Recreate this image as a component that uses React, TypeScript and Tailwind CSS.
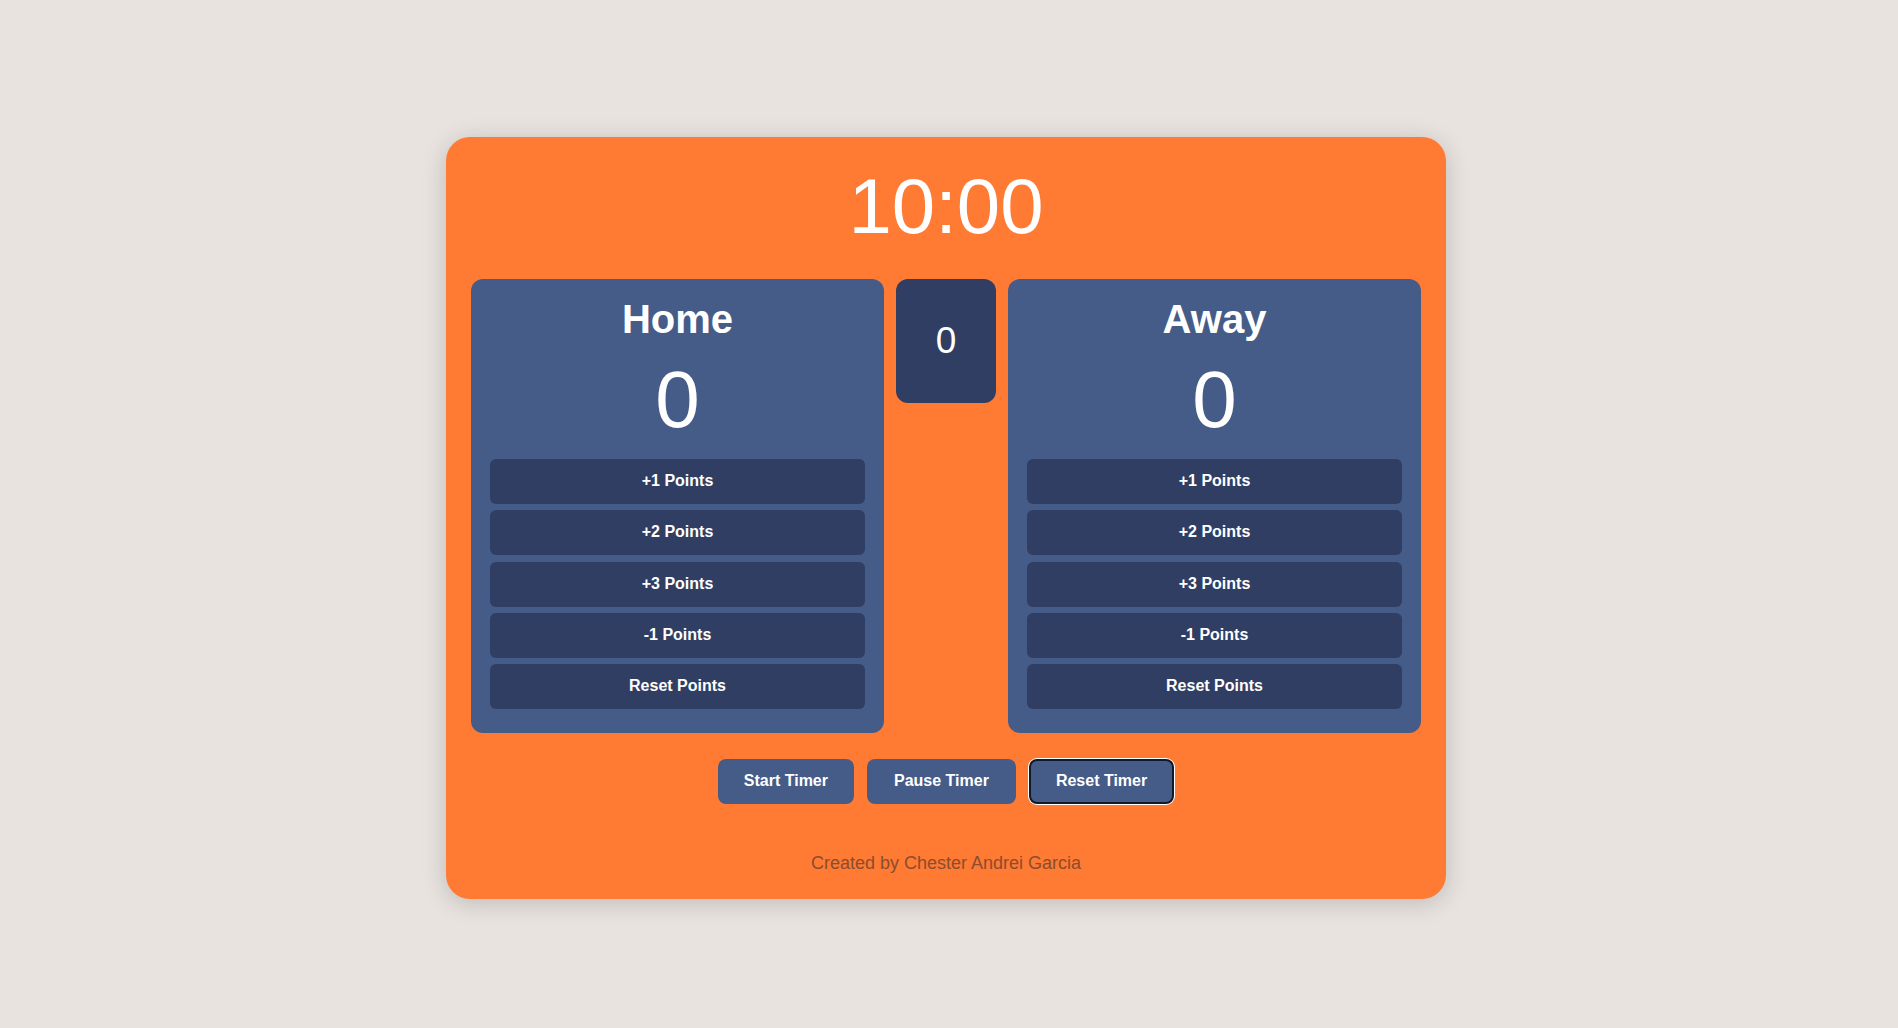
import React, { useState } from "react";

function TeamPanel({ name }: { name: string }) {
  const [score, setScore] = useState(0);
  const actions: [string, (s: number) => number][] = [
    ["+1 Points", (s) => s + 1],
    ["+2 Points", (s) => s + 2],
    ["+3 Points", (s) => s + 3],
    ["-1 Points", (s) => s - 1],
    ["Reset Points", () => 0],
  ];
  return (
    <div className="flex w-[413px] flex-col rounded-xl bg-[#465c88] px-[19px] pt-[17px] pb-[24px] text-center text-white">
      <h2 className="text-[40px] font-bold leading-[46px]">{name}</h2>
      <div className="mt-[10px] text-[80px] leading-[96px]">{score}</div>
      <div className="mt-[11px] flex flex-col gap-[6.25px]">
        {actions.map(([label, fn]) => (
          <button
            key={label}
            onClick={() => setScore(fn)}
            className="flex h-[45px] items-center justify-center rounded-md bg-[#2f3e62] pb-[1px] text-[16px] font-bold text-white"
          >
            {label}
          </button>
        ))}
      </div>
    </div>
  );
}

export default function App() {
  return (
    <div
      className="flex min-h-screen items-center justify-center bg-[#e8e3df] pt-2 pr-[6px]"
      style={{ fontFamily: '"Liberation Sans", Arial, sans-serif' }}
    >
      <div className="flex w-[1000px] flex-col items-center rounded-3xl bg-[#ff7a33] px-[25px] pt-[23px] pb-[26px] shadow-[0_4px_24px_rgba(0,0,0,0.18)]">
        <div className="text-[78px] leading-[92px] text-white">10:00</div>
        <div className="mt-[27px] flex w-full items-start gap-[12px]">
          <TeamPanel name="Home" />
          <div className="flex h-[124px] w-[100px] items-center justify-center rounded-xl bg-[#2f3e62] text-[37px] text-white">
            0
          </div>
          <TeamPanel name="Away" />
        </div>
        <div className="mt-[26px] flex items-center gap-[13px]">
          <button className="flex h-[45px] items-center rounded-lg bg-[#465c88] px-[26px] pb-[1px] text-[16px] font-bold text-white">
            Start Timer
          </button>
          <button className="flex h-[45px] items-center rounded-lg bg-[#465c88] px-[27px] pb-[1px] text-[16px] font-bold text-white">
            Pause Timer
          </button>
          <button className="flex h-[45px] items-center rounded-lg border-2 border-[#111827] bg-[#465c88] px-[25px] pb-[1px] text-[16px] font-bold text-white shadow-[0_0_0_1px_#ffffff]">
            Reset Timer
          </button>
        </div>
        <p className="mt-[49px] text-[18px] leading-[20px] text-[#8a4d2f]">
          Created by Chester Andrei Garcia
        </p>
      </div>
    </div>
  );
}
